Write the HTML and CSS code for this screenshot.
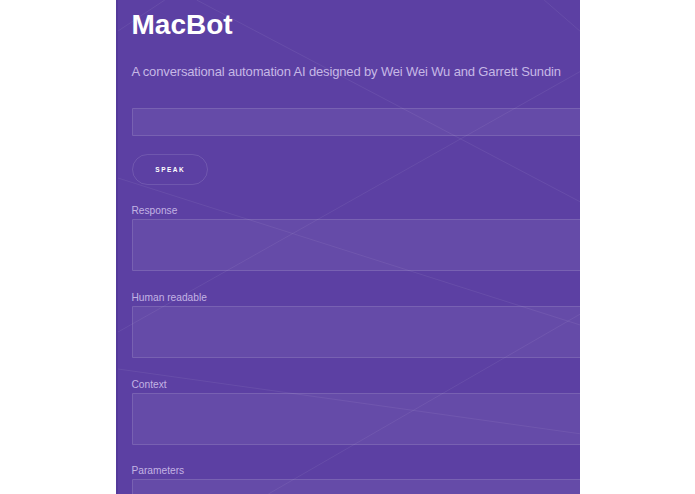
FILE: index.html
```html
<!DOCTYPE html>
<html lang="en">
<head>
<meta charset="utf-8">
<title>MacBot</title>
<link rel="stylesheet" href="styles.css">
</head>
<body>
<main class="panel">
  <svg class="bg-lines" viewBox="0 0 464 494" preserveAspectRatio="none" aria-hidden="true">
    <line x1="79" y1="0" x2="600" y2="273"/>
    <line x1="490" y1="57" x2="0" y2="332"/>
    <line x1="0" y1="178" x2="480" y2="330"/>
    <line x1="0" y1="369" x2="480" y2="436"/>
    <line x1="480" y1="305" x2="151" y2="494"/>
    <line x1="428" y1="0" x2="480" y2="45"/>
    <line x1="0" y1="31" x2="47" y2="0"/>
  </svg>
  <div class="content">
    <h1 class="title">MacBot</h1>
    <p class="subtitle">A conversational automation AI designed by Wei Wei Wu and Garrett Sundin</p>
    <input class="field field-input" type="text" aria-label="Message">
    <button class="speak" type="button">SPEAK</button>
    <label class="label" for="response">Response</label>
    <textarea class="field field-area" id="response"></textarea>
    <label class="label" for="human">Human readable</label>
    <textarea class="field field-area" id="human"></textarea>
    <label class="label" for="context">Context</label>
    <textarea class="field field-area" id="context"></textarea>
    <label class="label" for="params">Parameters</label>
    <textarea class="field field-area" id="params"></textarea>
  </div>
</main>
</body>
</html>
```

FILE: styles.css
```css
html, body {
  margin: 0;
  padding: 0;
  background: #ffffff;
}

body {
  font-family: "Liberation Sans", Arial, Helvetica, sans-serif;
  height: 494px;
  overflow: hidden;
}

.panel {
  position: relative;
  box-sizing: border-box;
  width: 464px;
  height: 494px;
  margin: 0 auto;
  background: #5c40a3;
  border-left: 2px solid #54399a;
  overflow: hidden;
}

.bg-lines {
  position: absolute;
  left: 0;
  top: 0;
  width: 100%;
  height: 100%;
  pointer-events: none;
}

.bg-lines line {
  stroke: rgba(255, 255, 255, 0.07);
  stroke-width: 1;
}

.content {
  position: relative;
  display: flex;
  flex-direction: column;
  align-items: flex-start;
  padding-left: 14px;
}

.title {
  margin: 11px 0 0;
  font-size: 28px;
  line-height: 28px;
  font-weight: 700;
  color: #ffffff;
}

.subtitle {
  margin: 24.5px 0 0;
  font-size: 13px;
  line-height: 16px;
  letter-spacing: -0.15px;
  color: #c6b8e6;
}

.field {
  display: block;
  box-sizing: border-box;
  width: 480px;
  margin: 0;
  padding: 0;
  background: rgba(255, 255, 255, 0.06);
  border: 1px solid rgba(255, 255, 255, 0.12);
  border-radius: 1px;
  outline: none;
  resize: none;
  color: #ffffff;
  font-family: inherit;
}

.field-input {
  margin-top: 28px;
  height: 28.5px;
}

.speak {
  box-sizing: border-box;
  margin-top: 17.5px;
  width: 76px;
  height: 31px;
  padding: 0 0 0 1.5px;
  background: transparent;
  border: 1px solid rgba(255, 255, 255, 0.12);
  border-radius: 16px;
  color: #ffffff;
  font-family: inherit;
  font-size: 6.5px;
  font-weight: 700;
  letter-spacing: 1.5px;
  cursor: pointer;
}

.label {
  display: block;
  margin-top: 18.7px;
  margin-bottom: 1px;
  font-size: 10.2px;
  line-height: 15px;
  color: #c3b3e3;
}

.field-area {
  height: 52px;
}
```
